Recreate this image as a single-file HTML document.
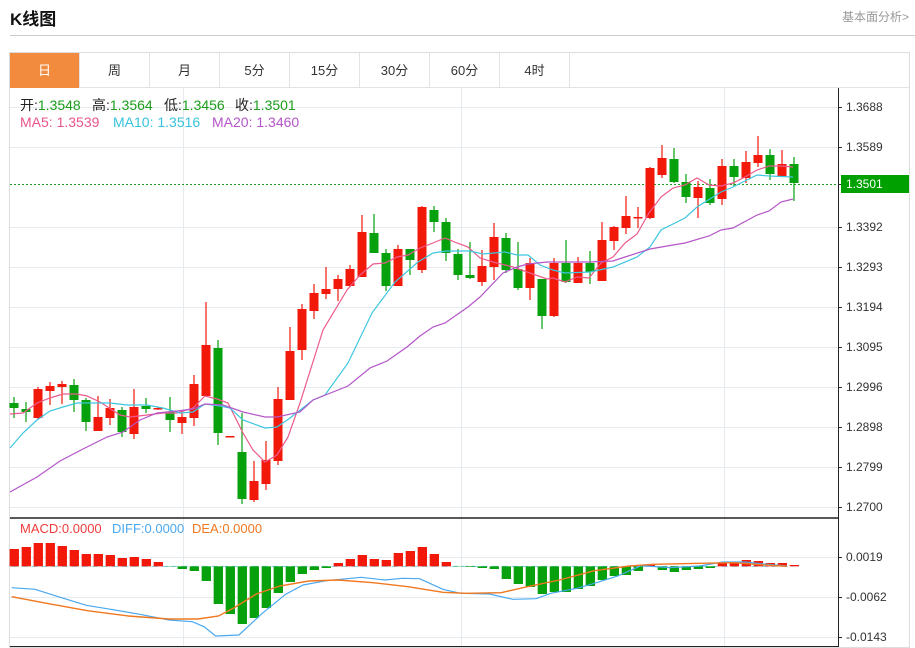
<!DOCTYPE html>
<html><head><meta charset="utf-8">
<style>
*{margin:0;padding:0;box-sizing:border-box}
body{width:915px;height:648px;background:#fff;font-family:"Liberation Sans","Noto Sans CJK SC",sans-serif;position:relative;overflow:hidden}
.title{position:absolute;left:10px;top:5px;font-size:17px;font-weight:bold;color:#111}
.link{position:absolute;left:842px;top:8px;font-size:12px;color:#999}
.hr{position:absolute;left:10px;top:35px;width:905px;height:1px;background:#ccc}
.box{position:absolute;left:9px;top:52px;width:901px;height:596px;border:1px solid #ddd}
.tabs{position:absolute;left:10px;top:53px;height:35px;width:899px;border-bottom:1px solid #e3e3e3}
.tab{position:absolute;top:0;width:70px;height:35px;line-height:35px;text-align:center;font-size:13px;color:#333;border-right:1px solid #e3e3e3}
.tab.on{background:#f28b3d;color:#fff}
.lg{position:absolute;font-size:14px;white-space:nowrap}
.ax{position:absolute;left:846px;font-size:12px;color:#333}
</style></head><body>
<div class="title">K线图</div>
<div class="link">基本面分析&gt;</div>
<div class="hr"></div>
<div class="box"></div>
<div class="tabs">
<div class="tab on" style="left:0">日</div>
<div class="tab" style="left:70px">周</div>
<div class="tab" style="left:140px">月</div>
<div class="tab" style="left:210px">5分</div>
<div class="tab" style="left:280px">15分</div>
<div class="tab" style="left:350px">30分</div>
<div class="tab" style="left:420px">60分</div>
<div class="tab" style="left:490px">4时</div>
</div>
<svg id="main" width="915" height="648" style="position:absolute;left:0;top:0"></svg>
<svg id="macd" width="915" height="148" viewBox="0 0 1570 444" preserveAspectRatio="none" style="position:absolute;left:0;top:500px"></svg>
<div class="lg" style="left:20px;top:95px;color:#222">开:<span style="color:#1a9e1a">1.3548</span></div>
<div class="lg" style="left:92px;top:95px;color:#222">高:<span style="color:#1a9e1a">1.3564</span></div>
<div class="lg" style="left:164px;top:95px;color:#222">低:<span style="color:#1a9e1a">1.3456</span></div>
<div class="lg" style="left:235px;top:95px;color:#222">收:<span style="color:#1a9e1a">1.3501</span></div>
<div class="lg" style="left:20px;top:114px;color:#e8558c">MA5: 1.3539</div>
<div class="lg" style="left:113px;top:114px;color:#35c3dd">MA10: 1.3516</div>
<div class="lg" style="left:212px;top:114px;color:#b455c8">MA20: 1.3460</div>
<div class="lg" style="left:20px;top:521px;font-size:13px;color:#f03c3c">MACD:0.0000</div>
<div class="lg" style="left:112px;top:521px;font-size:13px;color:#4aa8f0">DIFF:0.0000</div>
<div class="lg" style="left:192px;top:521px;font-size:13px;color:#f07820">DEA:0.0000</div>
<div class="ax" style="top:100px">1.3688</div>
<div class="ax" style="top:140px">1.3589</div>
<div class="ax" style="top:220px">1.3392</div>
<div class="ax" style="top:260px">1.3293</div>
<div class="ax" style="top:300px">1.3194</div>
<div class="ax" style="top:340px">1.3095</div>
<div class="ax" style="top:380px">1.2996</div>
<div class="ax" style="top:420px">1.2898</div>
<div class="ax" style="top:460px">1.2799</div>
<div class="ax" style="top:500px">1.2700</div>
<div style="position:absolute;left:841px;top:175px;width:68px;height:18px;background:#00a000;color:#fff;font-size:12px;line-height:18px;padding-left:5px">1.3501</div>
<div class="ax" style="top:550px">0.0019</div>
<div class="ax" style="top:590px">-0.0062</div>
<div class="ax" style="top:630px">-0.0143</div>
<script>
var NS="http://www.w3.org/2000/svg";
function el(p,t,a){var e=document.createElementNS(NS,t);for(var k in a)e.setAttribute(k,a[k]);p.appendChild(e);return e;}
var m=document.getElementById("main");
[107,147,227,267,307,347,387,427,467,507].forEach(function(y){el(m,"line",{x1:10,x2:838,y1:y+.5,y2:y+.5,stroke:"#e6ebf0"});});
[557,597,637].forEach(function(y){el(m,"line",{x1:10,x2:838,y1:y+.5,y2:y+.5,stroke:"#e6ebf0"});});
[183,461,724].forEach(function(x){el(m,"line",{x1:x+.5,x2:x+.5,y1:88,y2:646,stroke:"#e6ebf0"});});
[107,147,227,267,307,347,387,427,467,507,557,597,637,184].forEach(function(y){el(m,"line",{x1:838,x2:842,y1:y+.5,y2:y+.5,stroke:"#333"});});
el(m,"line",{x1:10,x2:838,y1:184.5,y2:184.5,stroke:"#1aa01a","stroke-dasharray":"2,2"});
el(m,"line",{x1:10,x2:838,y1:518,y2:518,stroke:"#222","stroke-width":1.5});
el(m,"line",{x1:10,x2:838,y1:646.5,y2:646.5,stroke:"#222"});
el(m,"line",{x1:838.5,x2:838.5,y1:88,y2:647,stroke:"#222"});
var C=[[403,408,397,418,'g'],[409,412,402,422,'g'],[418,389,387,419,'r'],[391,386,382,405,'r'],[387,384,381,404,'r'],[385,400,379,412,'g'],[400,422,398,431,'g'],[431,417,396,431,'r'],[418,408,399,425,'r'],[410,432,407,437,'g'],[434,407,389,439,'r'],[406,409,398,413,'g'],[409,408,407,410,'r'],[412,420,397,432,'g'],[423,417,410,434,'r'],[418,384,375,426,'r'],[396,345,302,396,'r'],[348,433,340,445,'g'],[437,436,436,437,'r'],[452,499,413,504,'g'],[500,481,461,502,'r'],[484,460,441,490,'r'],[461,399,387,465,'r'],[400,351,327,400,'r'],[350,309,304,360,'r'],[311,293,284,319,'r'],[294,289,267,299,'r'],[289,279,275,301,'r'],[286,269,265,287,'r'],[277,232,215,277,'r'],[233,253,214,253,'g'],[253,286,249,291,'g'],[286,249,245,286,'r'],[249,260,249,275,'g'],[270,207,206,273,'r'],[210,222,206,232,'g'],[222,253,218,261,'g'],[254,275,249,280,'g'],[275,278,242,279,'g'],[282,266,250,286,'r'],[267,237,223,280,'r'],[238,270,233,273,'g'],[269,288,242,290,'g'],[288,263,258,300,'r'],[279,316,279,329,'g'],[316,263,258,317,'r'],[263,282,240,283,'g'],[283,263,257,283,'r'],[263,272,251,284,'g'],[281,240,222,281,'r'],[241,227,226,250,'r'],[228,216,196,234,'r'],[218,217,207,228,'r'],[218,168,167,219,'r'],[175,158,145,178,'r'],[159,182,148,183,'g'],[182,197,174,203,'g'],[198,187,181,218,'r'],[188,203,179,205,'g'],[199,166,159,205,'r'],[166,177,159,186,'g'],[178,162,151,183,'r'],[163,155,136,167,'r'],[155,174,149,180,'g'],[176,164,150,177,'r'],[164,183,157,201,'g']];
C.forEach(function(c,i){var x=14+12*i;var col=c[4]=='r'?'#f2190b':'#06a10c';
el(m,"line",{x1:x,x2:x,y1:c[2],y2:c[3],stroke:col,"stroke-width":1.2});
var t=Math.min(c[0],c[1]),h=Math.max(Math.abs(c[0]-c[1]),1.5);
el(m,"rect",{x:x-4.5,y:t,width:9,height:h,fill:col});});
function pl(p,pts,col,w,extra){var a={points:pts,fill:"none",stroke:col,"stroke-width":w||1.2};for(var k in extra)a[k]=extra[k];el(p,"polyline",a);}
pl(m,"10,414 23,413 37,403 50,398 63,394 77,394 87,396 100,402 120,415 130,417 147,415 163,413 177,413 193,408 205,396 217,399 228,403 243,433 253,450 265,462 277,455 288,437 300,403 323,330 347,290 360,275 373,264 385,263 397,257 408,255 420,248 433,243 445,238 457,243 468,247 480,258 493,262 513,267 530,273 547,279 553,278 565,282 577,277 589,278 601,263 613,257 625,243 637,234 649,213 661,197 673,188 685,185 697,178 709,185 721,186 733,183 745,177 757,170 769,166 781,166 793,167","#ec5a8e");
pl(m,"10,448 23,433 37,420 50,411 63,407 77,403 90,403 110,403 127,405 147,405 163,408 180,413 193,412 205,404 220,406 230,408 243,420 265,428 277,427 290,418 313,400 325,395 348,363 372,313 395,282 418,262 433,253 447,251 470,251 483,254 505,252 517,255 528,255 540,265 553,270 565,273 590,272 613,267 637,257 650,247 661,230 685,218 697,207 721,192 733,187 757,175 769,176 793,177","#3ec6e0");
pl(m,"10,492 37,477 60,461 83,449 107,437 123,432 140,420 157,413 177,411 193,409 205,404 223,405 243,412 265,417 277,417 300,412 313,400 348,386 370,368 387,361 407,347 420,336 433,327 445,323 468,307 480,297 503,273 517,267 528,264 547,262 590,262 613,261 625,257 650,249 673,245 685,243 709,236 721,230 733,228 757,215 769,211 781,202 793,199","#b455c8");
var M=document.getElementById("macd");
el(M,"line",{x1:20,x2:1360,y1:199,y2:199,stroke:"#7fd0ea","stroke-dasharray":"6,4","vector-effect":"non-scaling-stroke"});
var H=[549,547,543,543,546,550,554,554,555,558,557,559,562,566.5,569,571,581,604,614,624,618,608,593,582,574,570,568,563,559,555,559,560,553,551,547,554,562,566.5,567,568,569,579,584,587,594,592,592,589,586,580,576,575,571,565,570,572,570,569,568,563,562,560,561,563,563,565];
H.forEach(function(y,i){var x=(14+12*i)*1.716;var zy=(y-500)*3;var col=zy<199?'#f2190b':'#06a10c';var t=Math.min(zy,199),h=Math.max(Math.abs(zy-199),1);el(M,"rect",{x:x-7.5,y:t,width:16,height:h,fill:col});});
pl(M,"20,263 60,268 100,290 148,316 190,328 240,343 290,360 330,365 350,380 370,408 410,405 450,340 490,283 520,255 560,242 620,232 660,240 690,235 720,236 760,268 790,280 840,282 880,298 920,296 945,280 990,265 1020,250 1060,228 1100,197 1150,203 1200,198 1240,186 1280,186 1310,192 1350,198","#4aa8f0",1.2,{"vector-effect":"non-scaling-stroke"});
pl(M,"20,290 80,310 150,332 220,348 290,357 340,357 375,348 400,325 440,282 480,258 530,243 580,240 640,248 700,260 760,277 800,280 860,278 900,262 960,240 1020,212 1080,198 1120,193 1200,190 1260,188 1310,195 1350,199","#f07820",1.4,{"vector-effect":"non-scaling-stroke"});
</script>
</body></html>
